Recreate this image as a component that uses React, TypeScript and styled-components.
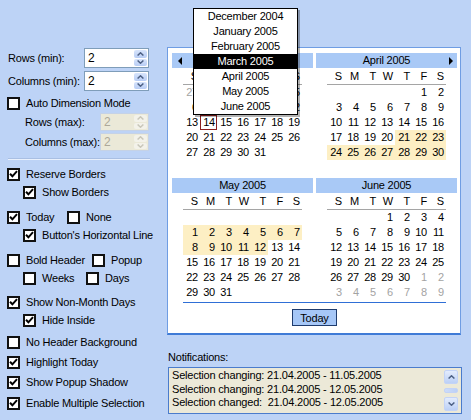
import styled, { createGlobalStyle } from 'styled-components'

const GlobalStyle = createGlobalStyle`
  html, body { margin: 0; padding: 0; }
  body {
    background: #bdd3f6;
    font-family: 'Liberation Sans', Arial, sans-serif;
    font-size: 11px;
    letter-spacing: -0.2px;
    color: #000;
  }
`

const Screen = styled.div`
  width: 471px;
  height: 420px;
  display: flex;
  background: #bdd3f6;
  overflow: hidden;
`

/* ---------- left options panel ---------- */

const Options = styled.div`
  width: 160px;
  box-sizing: border-box;
  padding: 48px 0 0 7px;
  display: flex;
  flex-direction: column;
`

const SpinRow = styled.div<{ $indent: number; $top: number }>`
  display: flex;
  align-items: center;
  padding-left: ${p => p.$indent}px;
  margin-top: ${p => p.$top}px;
`

const SpinLabel = styled.span<{ $w: number }>`
  width: ${p => p.$w}px;
  white-space: nowrap;
`

const SpinBox = styled.div<{ $w: number; $h: number; $disabled?: boolean }>`
  width: ${p => p.$w}px;
  height: ${p => p.$h}px;
  box-sizing: border-box;
  border: 1px solid ${p => (p.$disabled ? '#c5d2e6' : '#7f9db9')};
  background: ${p => (p.$disabled ? '#ebe9d8' : '#fff')};
  display: flex;
`

const SpinValue = styled.span<{ $disabled?: boolean }>`
  flex: 1;
  padding-left: 3px;
  font-size: 12px;
  display: flex;
  align-items: center;
  color: ${p => (p.$disabled ? '#aca899' : '#000')};
`

const SpinButtons = styled.div`
  width: 15px;
  display: flex;
  flex-direction: column;
  gap: 1px;
  padding: 1px;
  box-sizing: border-box;
`

const SpinButton = styled.div<{ $disabled?: boolean }>`
  flex: 1;
  display: flex;
  align-items: center;
  justify-content: center;
  border-radius: 2px;
  background: ${p =>
    p.$disabled ? '#f3f2ea' : 'linear-gradient(#d7e4fb, #b8cdf5)'};
`

const Separator = styled.div`
  height: 0;
  margin: 7px 10px 5px 1px;
  border-top: 1px solid #a9bfe3;
  border-bottom: 1px solid #e9f0fc;
`

const CheckRow = styled.div<{ $indent?: boolean; $top?: number }>`
  display: flex;
  align-items: center;
  height: 18px;
  padding-left: ${p => (p.$indent ? 16 : 0)}px;
  margin-top: ${p => p.$top ?? 0}px;
`

const CheckItem = styled.label<{ $w?: number }>`
  display: flex;
  align-items: center;
  gap: 6px;
  white-space: nowrap;
  width: ${p => (p.$w ? `${p.$w}px` : 'auto')};
`

const Box = styled.span`
  width: 13px;
  height: 13px;
  box-sizing: border-box;
  border: 2px solid #111;
  background: #fff;
  display: flex;
  align-items: center;
  justify-content: center;
`

/* ---------- calendar ---------- */

const Main = styled.div`
  display: flex;
  flex-direction: column;
  padding: 47px 0 0 7px;
`

const Calendar = styled.div`
  position: relative;
  width: 294px;
  box-sizing: border-box;
  border: 1px solid #6f9de3;
  border-bottom-width: 2px;
  border-bottom-color: #3f7bd6;
  background: #fff;
  padding: 5px 3px 7px 4px;
  display: flex;
  flex-direction: column;
`

const Months = styled.div`
  display: grid;
  grid-template-columns: 141px 141px;
  column-gap: 3px;
  row-gap: 3px;
`

const MonthBlock = styled.div`
  display: flex;
  flex-direction: column;
`

const MonthHeader = styled.div`
  position: relative;
  height: 15px;
  line-height: 15px;
  text-align: center;
  background: #a9c9f6;
  color: #000;
`

const Arrow = styled.span<{ $side: 'left' | 'right' }>`
  position: absolute;
  top: 4px;
  ${p => (p.$side === 'left' ? 'left: 6px;' : 'right: 4px;')}
  width: 0;
  height: 0;
  border-top: 4px solid transparent;
  border-bottom: 4px solid transparent;
  ${p =>
    p.$side === 'left'
      ? 'border-right: 4px solid #000;'
      : 'border-left: 4px solid #000;'}
`

const WeekDays = styled.div`
  width: 119px;
  margin: 0 auto;
  display: grid;
  grid-template-columns: repeat(7, 17px);
  height: 16px;
  align-items: center;
  border-bottom: 1px solid #a5a5a5;
`

const Dates = styled.div`
  width: 119px;
  margin: 0 auto;
  display: grid;
  grid-template-columns: repeat(7, 17px);
  grid-auto-rows: 15px;
`

const WeekDay = styled.span`
  text-align: right;
  padding-right: 2px;
`

const DayCell = styled.span<{ $muted?: boolean; $sel?: boolean; $today?: boolean }>`
  text-align: right;
  padding-right: 2px;
  line-height: 15px;
  color: ${p => (p.$muted ? '#a3a3a3' : '#000')};
  background: ${p => (p.$sel ? '#fdefc4' : 'transparent')};
  box-shadow: ${p => (p.$today ? 'inset 0 0 0 1px #8b1f1f' : 'none')};
`

const TodayLine = styled.div`
  height: 1px;
  margin: 2px 11px 0;
  background: #2f6fd6;
`

const TodayButton = styled.div`
  align-self: center;
  margin-top: 6px;
  width: 45px;
  height: 17px;
  box-sizing: border-box;
  border: 1px solid #1f3c6e;
  background: #a6c7f7;
  display: flex;
  align-items: center;
  justify-content: center;
`

const Popup = styled.div`
  position: absolute;
  left: 25px;
  top: -40px;
  width: 103px;
  border: 1px solid #000;
  background: #fff;
  box-shadow: 2px 2px 0 rgba(0, 0, 0, 0.3);
  z-index: 2;
`

const PopupItem = styled.div<{ $active?: boolean }>`
  height: 15px;
  line-height: 15px;
  text-align: center;
  background: ${p => (p.$active ? '#000' : '#fff')};
  color: ${p => (p.$active ? '#fff' : '#000')};
`

/* ---------- notifications ---------- */

const NoteLabel = styled.div`
  margin: 15px 0 0 1px;
  height: 14px;
  line-height: 14px;
`

const ListBox = styled.div`
  margin: 3px 0 0 1px;
  width: 294px;
  height: 47px;
  box-sizing: border-box;
  border: 1px solid #4b7ccc;
  background: #ece9d8;
  display: flex;
`

const Lines = styled.div`
  flex: 1;
  padding: 1px 0 0 3px;
  display: flex;
  flex-direction: column;
`

const Line = styled.div`
  height: 13.5px;
  line-height: 13.5px;
  font-size: 11px;
  white-space: pre;
`

const ScrollBar = styled.div`
  width: 14px;
  margin: 2px 3px 2px 0;
  display: flex;
  flex-direction: column;
  align-items: stretch;
  gap: 3px;
`

const ScrollButton = styled.div`
  height: 14px;
  box-sizing: border-box;
  border: 1px solid #c3d3f7;
  border-radius: 2px;
  background: linear-gradient(#e3ecfd, #bcd0f6);
  display: flex;
  align-items: center;
  justify-content: center;
`

const Thumb = styled.div`
  flex: 1;
  margin: 1px 0;
  border: 1px solid #c3d3f7;
  border-radius: 2px;
  background: linear-gradient(90deg, #cddcfa, #bcd0f6);
`

/* ---------- helpers ---------- */

const Chevron = ({ dir, color }: { dir: 'up' | 'down'; color: string }) => (
  <svg width="7" height="4" viewBox="0 0 7 4">
    <path
      d={dir === 'up' ? 'M0.6 3.5 L3.5 0.8 L6.4 3.5' : 'M0.6 0.5 L3.5 3.2 L6.4 0.5'}
      fill="none"
      stroke={color}
      strokeWidth="1.5"
    />
  </svg>
)

const Spinner = ({ w, h, disabled }: { w: number; h: number; disabled?: boolean }) => {
  const c = disabled ? '#c9c7ba' : '#4d6185'
  return (
    <SpinBox $w={w} $h={h} $disabled={disabled}>
      <SpinValue $disabled={disabled}>2</SpinValue>
      <SpinButtons>
        <SpinButton $disabled={disabled}>
          <Chevron dir="up" color={c} />
        </SpinButton>
        <SpinButton $disabled={disabled}>
          <Chevron dir="down" color={c} />
        </SpinButton>
      </SpinButtons>
    </SpinBox>
  )
}

const Check = ({ label, checked, w }: { label: string; checked?: boolean; w?: number }) => (
  <CheckItem $w={w}>
    <Box>
      {checked && (
        <svg width="9" height="8" viewBox="0 0 9 8">
          <path d="M1 3.8 L3.4 6.3 L8 1.2" fill="none" stroke="#000" strokeWidth="2" />
        </svg>
      )}
    </Box>
    {label}
  </CheckItem>
)

type Cell = { d: number; kind: 'cur' | 'out' | 'none' }

const buildMonth = (
  start: number,
  len: number,
  prevLen: number,
  showLead: boolean,
  showTrail: boolean
): Cell[] => {
  const lead = start === 0 ? 7 : start
  const cells: Cell[] = []
  for (let i = 0; i < 42; i++) {
    const n = i - lead + 1
    if (n < 1) cells.push({ d: prevLen + n, kind: showLead ? 'out' : 'none' })
    else if (n > len) cells.push({ d: n - len, kind: showTrail ? 'out' : 'none' })
    else cells.push({ d: n, kind: 'cur' })
  }
  return cells
}

const months = [
  { name: 'March 2005', cells: buildMonth(2, 31, 28, true, false), arrow: 'left' as const,
    sel: (_d: number) => false, today: 14 },
  { name: 'April 2005', cells: buildMonth(5, 30, 31, false, false), arrow: 'right' as const,
    sel: (d: number) => d >= 21, today: 0 },
  { name: 'May 2005', cells: buildMonth(0, 31, 30, false, false), arrow: undefined,
    sel: (d: number) => d <= 12, today: 0 },
  { name: 'June 2005', cells: buildMonth(3, 30, 31, false, true), arrow: undefined,
    sel: (_d: number) => false, today: 0 },
]

const weekLetters = ['S', 'M', 'T', 'W', 'T', 'F', 'S']

const popupMonths = [
  'December 2004',
  'January 2005',
  'February 2005',
  'March 2005',
  'April 2005',
  'May 2005',
  'June 2005',
]

const notes = [
  'Selection changing: 21.04.2005 - 11.05.2005',
  'Selection changing: 21.04.2005 - 12.05.2005',
  'Selection changed:  21.04.2005 - 12.05.2005',
]

export default function App() {
  return (
    <>
      <GlobalStyle />
      <Screen>
        <Options>
          <SpinRow $indent={1} $top={0}>
            <SpinLabel $w={76}>Rows (min):</SpinLabel>
            <Spinner w={65} h={20} />
          </SpinRow>
          <SpinRow $indent={1} $top={3}>
            <SpinLabel $w={76}>Columns (min):</SpinLabel>
            <Spinner w={65} h={20} />
          </SpinRow>
          <CheckRow $top={3}>
            <Check label="Auto Dimension Mode" />
          </CheckRow>
          <SpinRow $indent={18} $top={1}>
            <SpinLabel $w={75}>Rows (max):</SpinLabel>
            <Spinner w={49} h={18} disabled />
          </SpinRow>
          <SpinRow $indent={18} $top={2}>
            <SpinLabel $w={75}>Columns (max):</SpinLabel>
            <Spinner w={49} h={18} disabled />
          </SpinRow>
          <Separator />

          <CheckRow>
            <Check label="Reserve Borders" checked />
          </CheckRow>
          <CheckRow $indent>
            <Check label="Show Borders" checked />
          </CheckRow>

          <CheckRow $top={7}>
            <Check label="Today" checked w={60} />
            <Check label="None" />
          </CheckRow>
          <CheckRow $indent>
            <Check label="Button's Horizontal Line" checked />
          </CheckRow>

          <CheckRow $top={7}>
            <Check label="Bold Header" w={85} />
            <Check label="Popup" />
          </CheckRow>
          <CheckRow $indent>
            <Check label="Weeks" w={63} />
            <Check label="Days" />
          </CheckRow>

          <CheckRow $top={6}>
            <Check label="Show Non-Month Days" checked />
          </CheckRow>
          <CheckRow $indent>
            <Check label="Hide Inside" checked />
          </CheckRow>

          <CheckRow $top={4}>
            <Check label="No Header Background" />
          </CheckRow>
          <CheckRow $top={2}>
            <Check label="Highlight Today" checked />
          </CheckRow>
          <CheckRow $top={2}>
            <Check label="Show Popup Shadow" checked />
          </CheckRow>
          <CheckRow $top={3}>
            <Check label="Enable Multiple Selection" checked />
          </CheckRow>
        </Options>

        <Main>
          <Calendar>
            <Months>
              {months.map(m => (
                <MonthBlock key={m.name}>
                  <MonthHeader>
                    {m.arrow && <Arrow $side={m.arrow} />}
                    {m.name}
                  </MonthHeader>
                  <WeekDays>
                    {weekLetters.map((l, i) => (
                      <WeekDay key={i}>{l}</WeekDay>
                    ))}
                  </WeekDays>
                  <Dates>
                    {m.cells.map((c, i) =>
                      c.kind === 'none' ? (
                        <DayCell key={i} />
                      ) : (
                        <DayCell
                          key={i}
                          $muted={c.kind === 'out'}
                          $sel={c.kind === 'cur' && m.sel(c.d)}
                          $today={c.kind === 'cur' && c.d === m.today}
                        >
                          {c.d}
                        </DayCell>
                      )
                    )}
                  </Dates>
                </MonthBlock>
              ))}
            </Months>
            <TodayLine />
            <TodayButton>Today</TodayButton>

            <Popup>
              {popupMonths.map(p => (
                <PopupItem key={p} $active={p === 'March 2005'}>
                  {p}
                </PopupItem>
              ))}
            </Popup>
          </Calendar>

          <NoteLabel>Notifications:</NoteLabel>
          <ListBox>
            <Lines>
              {notes.map((n, i) => (
                <Line key={i}>{n}</Line>
              ))}
            </Lines>
            <ScrollBar>
              <ScrollButton>
                <Chevron dir="up" color="#4d6185" />
              </ScrollButton>
              <Thumb />
              <ScrollButton>
                <Chevron dir="down" color="#4d6185" />
              </ScrollButton>
            </ScrollBar>
          </ListBox>
        </Main>
      </Screen>
    </>
  )
}
